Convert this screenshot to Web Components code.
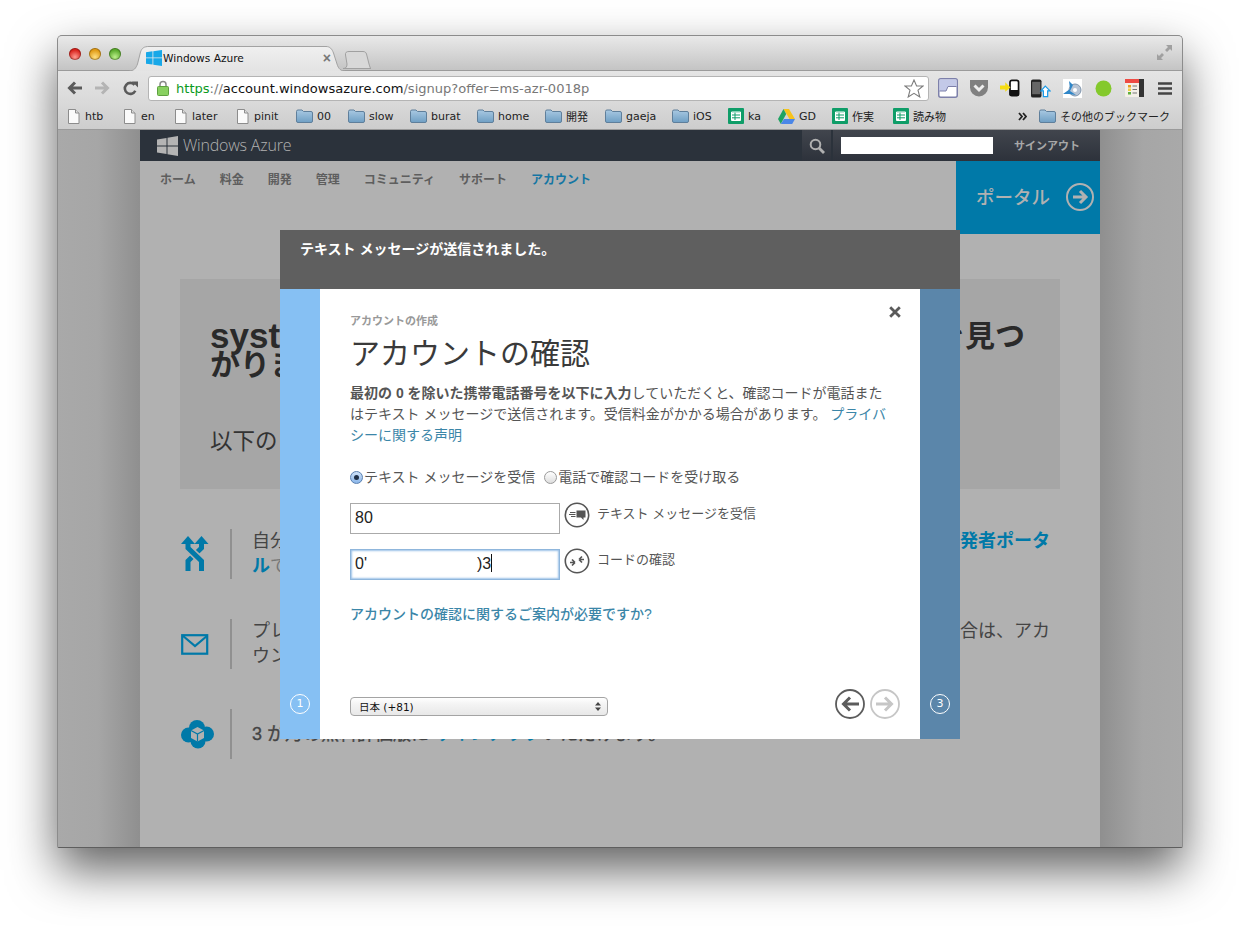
<!DOCTYPE html>
<html lang="ja"><head><meta charset="utf-8"><title>Windows Azure</title>
<style>
html,body{margin:0;padding:0;background:#fff;width:1239px;height:926px;overflow:hidden}
body{font-family:"Liberation Sans","Noto Sans CJK JP",sans-serif;--cjk:"Liberation Sans","Noto Sans CJK JP",sans-serif;--ui:"DejaVu Sans","Noto Sans CJK JP",sans-serif}
</style></head><body>
<x-window>
  <x-tabstrip></x-tabstrip>
  <x-toolbar url-a="https" url-b="://" url-c="account.windowsazure.com" url-d="/signup?offer=ms-azr-0018p"></x-toolbar>
  <x-bookmarks>
    <x-bm w="56" ico="doc">htb</x-bm><x-bm w="51" ico="doc">en</x-bm><x-bm w="62" ico="doc">later</x-bm><x-bm w="60" ico="doc">pinit</x-bm>
    <x-bm w="52" ico="folder">00</x-bm><x-bm w="62" ico="folder">slow</x-bm><x-bm w="67" ico="folder">burat</x-bm><x-bm w="68" ico="folder">home</x-bm>
    <x-bm w="60" ico="folder">開発</x-bm><x-bm w="67" ico="folder">gaeja</x-bm><x-bm w="56" ico="folder">iOS</x-bm><x-bm w="50" ico="sheet">ka</x-bm>
    <x-bm w="54" ico="drive">GD</x-bm><x-bm w="61" ico="sheet">作実</x-bm><x-bm w="125" ico="sheet">読み物</x-bm>
    <x-bm w="21" ico="chev"></x-bm><x-bm w="134" ico="folder">その他のブックマーク</x-bm>
  </x-bookmarks>
  <x-azure-page>
    <x-azure-header></x-azure-header>
    <x-azure-nav active="アカウント"></x-azure-nav>
    <x-hero></x-hero>
    <x-features>
      <x-feature ico="shuffle"><span>自分</span><span class="r link">発者ポータ</span><br><span class="link">ル</span><span class="dim">で</span></x-feature>
      <x-feature ico="mail"><span>プレ</span><span class="r">合は、アカ</span><br><span>ウン</span></x-feature>
      <x-feature ico="cloud" three><span>3 か月の無料評価版に <span class="blue">サインアップ</span>いただけます。</span></x-feature>
    </x-features>
    <x-modal slot="modal"></x-modal>
  </x-azure-page>
</x-window>
<script>
const ICONS={
doc:`<svg width="13" height="15" viewBox="0 0 13 15"><path d="M1.5.5H8.5L12 4V14.5H1.5Z" fill="#fafafa" stroke="#8c8c8c"/><path d="M8.5.5V4H12" fill="#ddd" stroke="#8c8c8c"/></svg>`,
folder:`<svg width="17" height="14" viewBox="0 0 17 14"><defs><linearGradient id="f" x1="0" y1="0" x2="0" y2="1"><stop offset="0" stop-color="#a9c9e2"/><stop offset="1" stop-color="#6f9fc4"/></linearGradient></defs><path d="M.5 2.5Q.5 1 2 1H6L7.5 2.5H15Q16.5 2.500 16.500 4V12Q16.500 13.500 15 13.500H2Q.5 13.500 .5 12Z" fill="url(#f)" stroke="#5f7f9b"/></svg>`,
sheet:`<svg width="16" height="16" viewBox="0 0 16 16"><rect width="16" height="16" rx="1" fill="#0f9d68"/><path d="M3.500 4H12.500V12.500H3.500ZM3.500 7H12.500M3.500 9.800H12.500M7 4V12.500" fill="#fff" stroke="#0f9d68" stroke-width="1"/><path d="M3.500 4H12.500V12.500H3.500Z" fill="none" stroke="#fff"/></svg>`,
drive:`<svg width="17" height="15" viewBox="0 0 17 15"><path d="M5.500 0H11L17 10H11.500Z" fill="#f7c31a"/><path d="M5.500 0L0 10L2.800 15L8.200 5Z" fill="#1ea362"/><path d="M6 10H17L14.200 15H2.800Z" fill="#4a86e8"/></svg>`,
chev:`<svg width="9" height="9" viewBox="0 0 9 9"><path d="M1 1L4 4.500L1 8M5 1L8 4.500L5 8" fill="none" stroke="#222" stroke-width="1.800"/></svg>`,
back:`<svg width="16" height="14" viewBox="0 0 16 14"><path d="M15 7H3M8 1.500L2.500 7L8 12.500" fill="none" stroke="#5a5a5a" stroke-width="3"/></svg>`,
fwd:`<svg width="16" height="14" viewBox="0 0 16 14"><path d="M1 7H13M8 1.500L13.500 7L8 12.500" fill="none" stroke="#b4b4b4" stroke-width="3"/></svg>`,
reload:`<svg width="15" height="15" viewBox="0 0 15 15"><path d="M12.300 9.800A5.500 5.500 0 1 1 11.500 3.800" fill="none" stroke="#5a5a5a" stroke-width="2.600"/><path d="M9 .5H15V6.500Z" fill="#5a5a5a"/></svg>`,
lock:`<svg width="12" height="16" viewBox="0 0 12 16"><path d="M3 7V4.500A3 3 0 0 1 9 4.500V7" fill="none" stroke="#8a8a8a" stroke-width="1.500"/><rect x=".5" y="6.500" width="11" height="9" rx="1" fill="#88d060" stroke="#5ea040"/></svg>`,
star:`<svg width="20" height="19" viewBox="0 0 20 19"><path d="M10 1L12.600 7H19L14 11.200L15.800 18L10 14.300L4.200 18L6 11.200L1 7H7.400Z" fill="#fff" stroke="#7d7d7d" stroke-width="1.100"/></svg>`,
e1:`<svg width="20" height="20" viewBox="0 0 20 20"><rect x=".75" y=".75" width="18.500" height="18.500" rx="2" fill="#fff" stroke="#7d80aa" stroke-width="1.500"/><path d="M1.500 1.500H18.500V8.500H10L8 13H1.500Z" fill="#c3c9e8"/><path d="M1.500 13H8L10 8.500H18.500" fill="none" stroke="#7d80aa"/></svg>`,
e2:`<svg width="20" height="18" viewBox="0 0 20 18"><path d="M1 1H19V8.500A9 9 0 0 1 1 8.500Z" fill="#808080"/><path d="M5.500 6.500L10 11L14.500 6.500" fill="none" stroke="#eee" stroke-width="3"/></svg>`,
e3:`<svg width="21" height="18" viewBox="0 0 21 18"><rect x="10.500" y="1" width="9" height="16" rx="2" fill="#fff" stroke="#111" stroke-width="1.800"/><rect x="10" y="11" width="10" height="6" rx="1" fill="#111"/><path d="M0 6.500H5.500V3L11 8.500L5.500 13V10.500H0Z" fill="#f5dc14"/></svg>`,
e4:`<svg width="21" height="19" viewBox="0 0 21 19"><rect x="0" y="0" width="11" height="19" rx="2" fill="#222"/><rect x="1.200" y="2.500" width="8.600" height="13" fill="#666"/><path d="M15 7L20 12H17.500V18H13V12H10.500Z" fill="#fff" stroke="#1a9be8" stroke-width="1.300"/></svg>`,
e5:`<svg width="19" height="19" viewBox="0 0 19 19"><rect width="19" height="19" fill="#fff"/><circle cx="12" cy="11" r="6" fill="#b8c4d4" stroke="#7f94ac"/><circle cx="12" cy="11" r="2" fill="#fff"/><path d="M0 15L7 10L6 2L10 6L7 12L13 16L6 15Z" fill="#2f86c8"/></svg>`,
e6:`<svg width="17" height="17" viewBox="0 0 17 17"><circle cx="8.500" cy="8.500" r="8" fill="#84c92c"/></svg>`,
e7:`<svg width="19" height="18" viewBox="0 0 19 18"><rect width="19" height="18" rx="1" fill="#f4f0e8"/><rect width="14" height="4" fill="#ee4b44"/><rect x="14" width="5" height="18" fill="#333"/><rect x="3" y="6" width="3" height="2.500" fill="#e6a020"/><rect x="3" y="9.500" width="3" height="2.500" fill="#f0d040"/><rect x="3" y="13" width="3" height="2.500" fill="#60b040"/><path d="M7.500 7H12M7.500 10.500H12M7.500 14H12" stroke="#777"/></svg>`,
menu:`<svg width="14" height="13" viewBox="0 0 14 13"><path d="M.5 1.500H13.500M.5 6.500H13.500M.5 11.500H13.500" stroke="#444" stroke-width="2.600" stroke-linecap="round"/></svg>`,
expand:`<svg width="15" height="15" viewBox="0 0 15 15"><path d="M9 0H15V6L13 4L10 7L8 5L11 2ZM0 15V9L2 11L5 8L7 10L4 13L6 15Z" fill="#a0a0a0"/></svg>`,
flag:`<svg width="16" height="16" viewBox="0 0 16 16"><path d="M0 2.300L6.500 1.300V7.500H0ZM7.300 1.200L16 0V7.500H7.300ZM0 8.300H6.500V14.600L0 13.700ZM7.300 8.300H16V16L7.300 14.800Z" fill="#18a8e8"/></svg>`,
logo:`<svg width="21" height="20" viewBox="0 0 21 20"><path d="M0 3.500L9.500 2V9.500H0ZM10.500 1.800L21 0V9.500H10.500ZM0 10.500H9.500V18L0 16.500ZM10.500 10.500H21V20L10.500 18.200Z" fill="#b4b4b4"/></svg>`,
search:`<svg width="16" height="16" viewBox="0 0 16 16"><circle cx="6.500" cy="6.500" r="4.800" fill="none" stroke="#b0b0b0" stroke-width="2"/><path d="M10 10L15 15" stroke="#b0b0b0" stroke-width="2.800"/></svg>`,
portal:`<svg width="28" height="28" viewBox="0 0 28 28"><circle cx="14" cy="14" r="13" fill="none" stroke="#b1b1b1" stroke-width="2"/><path d="M7 14H19M14 8L20 14L14 20" fill="none" stroke="#b1b1b1" stroke-width="3"/></svg>`,
shuffle:`<svg width="28" height="36" viewBox="0 0 28 36"><g fill="none" stroke-width="5"><path d="M20.500 8V12L7 25V35" stroke="#0079a8"/><path d="M7 8V12L20.500 25V35" stroke="#b1b1b1" stroke-width="8"/><path d="M7 8V12L20.500 25V35" stroke="#0079a8"/></g><path d="M7 0L14 8H0ZM20.500 0L27.500 8H13.500Z" fill="#0079a8"/></svg>`,
mail:`<svg width="28" height="21" viewBox="0 0 28 21"><rect x="1.200" y="1.200" width="25" height="18.500" fill="none" stroke="#0079a8" stroke-width="2.200"/><path d="M1.500 1.500L14 12L26.500 1.500" fill="none" stroke="#0079a8" stroke-width="2.200"/></svg>`,
cloud:`<svg width="33" height="29" viewBox="0 0 33 29"><g fill="#0079a8"><circle cx="7.500" cy="15" r="7.500"/><circle cx="16" cy="8" r="8"/><circle cx="25.500" cy="14" r="7.500"/><circle cx="17" cy="21" r="7.500"/></g><path d="M16.500 7L23 10.500V18L16.500 21.500L10 18V10.500Z" fill="#b1b1b1"/><path d="M10 10.500L16.500 14L23 10.500M16.500 14V21.500" fill="none" stroke="#0079a8" stroke-width="1.200"/></svg>`,
sms:`<svg width="26" height="26" viewBox="0 0 26 26"><circle cx="13" cy="13" r="11.700" fill="#fff" stroke="#555" stroke-width="1.600"/><path d="M6 10.500H11.500M5 12.500H11.500M7 14.500H11.500" stroke="#555"/><path d="M12.500 8.500H21.500V15.500H19.500V18L17 15.500H12.500Z" fill="#555"/></svg>`,
code:`<svg width="26" height="26" viewBox="0 0 26 26"><circle cx="13" cy="13" r="11.700" fill="#fff" stroke="#555" stroke-width="1.600"/><path d="M6 14.500H11M11 14.500L8 11.500M11 14.500L8 17.500M20 11.500H15M15 11.500L18 8.500M15 11.500L18 14.500" fill="none" stroke="#555" stroke-width="1.700"/></svg>`,
prev:`<svg width="30" height="30" viewBox="0 0 30 30"><circle cx="15" cy="15" r="14" fill="#fff" stroke="#5c5c5c" stroke-width="1.800"/><path d="M24 15H9M15 8.500L8.500 15L15 21.500" fill="none" stroke="#5c5c5c" stroke-width="3"/></svg>`,
next:`<svg width="30" height="30" viewBox="0 0 30 30"><circle cx="15" cy="15" r="14" fill="#fff" stroke="#c6c6c6" stroke-width="1.800"/><path d="M6 15H21M15 8.500L21.500 15L15 21.500" fill="none" stroke="#c6c6c6" stroke-width="3"/></svg>`,
close:`<svg width="12" height="12" viewBox="0 0 12 12"><path d="M1.200 1.200L10.800 10.800M10.800 1.200L1.200 10.800" stroke="#5a5a5a" stroke-width="2.800"/></svg>`,
updown:`<svg width="6" height="9" viewBox="0 0 6 9"><path d="M3 0L6 3.500H0ZM3 9L0 5.500H6Z" fill="#444"/></svg>`
};
class Base extends HTMLElement{
  constructor(){super();this.attachShadow({mode:'open'});}
  connectedCallback(){if(!this.done){this.done=1;this.shadowRoot.innerHTML='<style>'+this.css()+'</style>'+this.html();}}
  css(){return ':host{display:block}'} html(){return '<slot></slot>'}
}
const ic=n=>ICONS[n];
customElements.define('x-window',class extends Base{
  css(){return `:host{display:flex;flex-direction:column;box-sizing:border-box;width:1126px;height:813px;margin:35px 0 0 57px;border:1px solid #8c8c8c;border-bottom-color:#5e5e5e;border-radius:5px 5px 2px 2px;box-shadow:0 22px 48px rgba(0,0,0,.62);overflow:hidden;background:#a8a8a8}`}
});
customElements.define('x-tabstrip',class extends Base{
  css(){return `:host{display:flex;align-items:flex-end;height:34px;border-bottom:1px solid #9b9b9b;background:linear-gradient(#e9e9e9,#c4c4c4);font:10.600px var(--ui);color:#111;position:relative}
  .lights{display:flex;gap:8px;align-self:flex-start;margin:12px 0 0 11px}
  .l{width:12px;height:12px;border-radius:50%;box-shadow:inset 0 0 0 1px rgba(0,0,0,.28)}
  .r{background:radial-gradient(circle at 50% 75%,#ff9a90,#d8221c 65%)}.y{background:radial-gradient(circle at 50% 75%,#ffdf80,#e09a14 65%)}.g{background:radial-gradient(circle at 50% 75%,#bdf08c,#5aaa2c 65%)}
  .tab{position:relative;width:216px;height:25px;margin:0 0 -1px 8px;display:flex;align-items:center;padding:0 14px 2px 17px;box-sizing:border-box;gap:1px}
  .tab>svg.shape{position:absolute;left:0;top:0}
  .tab span{position:relative;flex:1;line-height:16px}
  .tab .fl,.tab .x{position:relative;display:flex}
  .x{color:#777;font-size:14px;line-height:14px;font-family:"Liberation Sans",sans-serif;font-weight:bold}
  .nt{margin:0 0 1px -2px;display:flex}
  .exp{margin:0 10px 0 auto;align-self:flex-start;padding-top:9px;display:flex}`}
  html(){return `<div class="lights"><div class="l r"></div><div class="l y"></div><div class="l g"></div></div>
  <div class="tab"><svg class="shape" width="216" height="25" viewBox="0 0 216 25"><defs><linearGradient id="t" x1="0" y1="0" x2="0" y2="1"><stop offset="0" stop-color="#f0f0f0"/><stop offset="1" stop-color="#e3e3e3"/></linearGradient></defs><path d="M0 25C5 25 7 22 8.500 18L11.500 6C13 2 15 .5 20 .5H197C201 .5 203 3 204.500 7L208 18C209.500 23 212 25 216 25" fill="url(#t)" stroke="#a2a2a2"/></svg><div class="fl">${ic('flag')}</div><span>Windows Azure</span><div class="x">×</div></div>
  <div class="nt"><svg width="28" height="18" viewBox="0 0 28 18"><path d="M0 17.500C3 17.500 4 16 4 13L2.500 4C2 1.500 3.500.5 6 .5H20C22 .5 23 1.500 23.500 3L26 13C27 16 27 17 28 17.500Z" fill="#d8d8d8" stroke="#a0a0a0"/></svg></div>
  <div class="exp">${ic('expand')}</div>`}
});
customElements.define('x-toolbar',class extends Base{
  css(){return `:host{display:flex;align-items:center;box-sizing:border-box;height:32px;background:linear-gradient(#e5e5e5,#d9d9d9);padding:2px 0 0 9px}
  .b{display:flex;align-items:center}
  .omni{box-sizing:border-box;width:781px;height:25px;margin:0 9px 0 10px;background:#fff;border:1px solid #b4b4b4;border-radius:3px;display:flex;align-items:center;padding:0 4px 0 8px;font:13.060px var(--ui);white-space:nowrap;color:#777}
  .omni .u{flex:1;margin-left:7px}.omni i{font-style:normal}.g{color:#0a9a1e}.d{color:#111}
  .ex{display:flex;align-items:center;gap:11px}.ex div{width:20px;display:flex;justify-content:center}`}
  html(){const a=n=>this.getAttribute('url-'+n);return `<div class="b">${ic('back')}</div><div class="b" style="margin-left:11px">${ic('fwd')}</div><div class="b" style="margin-left:13px">${ic('reload')}</div>
  <div class="omni">${ic('lock')}<span class="u"><i class="g">${a('a')}</i>${a('b')}<i class="d">${a('c')}</i>${a('d')}</span>${ic('star')}</div>
  <div class="ex"><div>${ic('e1')}</div><div>${ic('e2')}</div><div>${ic('e3')}</div><div>${ic('e4')}</div><div>${ic('e5')}</div><div>${ic('e6')}</div><div>${ic('e7')}</div><div>${ic('menu')}</div></div>`}
});
customElements.define('x-bookmarks',class extends Base{
  css(){return `:host{display:flex;align-items:center;height:26px;padding-left:9px;background:linear-gradient(#d9d9d9,#cdcdcd);border-bottom:1px solid #9a9a9a;font:11px var(--ui);color:#222}`}
});
customElements.define('x-bm',class extends Base{
  css(){return `:host{display:flex;align-items:center;flex:none;width:${this.getAttribute('w')}px;gap:${this.getAttribute('ico')=='doc'?5:4}px;white-space:nowrap}.i{display:flex}`}
  html(){return `<div class="i">${ic(this.getAttribute('ico'))}</div><slot></slot>`}
});
customElements.define('x-azure-page',class extends Base{
  css(){return `:host{display:block;position:relative;flex:1;background:linear-gradient(90deg,#a9a9a9 0,#a6a6a6 40px,#8f8f8f 82px,#8f8f8f 1042px,#a6a6a6 1085px,#a9a9a9 100%)}
  .col{width:960px;height:717px;margin-left:82px;background:#b1b1b1;overflow:hidden}
  ::slotted(x-modal){position:absolute;left:222px;top:100px}`}
  html(){return `<div class="col"><slot></slot></div><slot name="modal"></slot>`}
});
customElements.define('x-azure-header',class extends Base{
  css(){return `:host{display:flex;align-items:center;height:31px;background:#2b323b;color:#b1b1b1}
  .logo{display:flex;align-items:center;padding-left:17px;gap:5px;flex:1;font:300 16px/30px "Open Sans",sans-serif;letter-spacing:-.2px}
  .logo span{margin-top:-1px}
  .logo svg{display:block}
  .right{display:flex;align-items:center;height:31px;width:298px;background:linear-gradient(#41454d,#2d323b)}
  .s{width:29px;height:31px;display:flex;align-items:center;justify-content:center;border-right:2px solid #2b323b}
  .box{width:152px;height:17px;background:#fff;margin-left:8px}
  .o{font:bold 11px var(--cjk);margin:-2px 0 0 21px;color:#a8a8a8}`}
  html(){return `<div class="logo">${ic('logo')}<span>Windows Azure</span></div><div class="right"><div class="s">${ic('search')}</div><div class="box"></div><div class="o">サインアウト</div></div>`}
});
customElements.define('x-azure-nav',class extends Base{
  css(){return `:host{display:flex;justify-content:space-between;height:73px;font:bold 12px var(--cjk);color:#5e5e5e}
  nav{display:flex;gap:24px;padding:10px 0 0 20px;height:18px;line-height:18px}
  .a{color:#1576a3}
  .p{width:144px;background:#0079a8;color:#b1b1b1;display:flex;align-items:center;gap:16px;padding-left:20px;box-sizing:border-box;font:500 18.500px var(--cjk);padding-bottom:3px}
  .p svg{display:block;margin-top:2px}`}
  html(){return `<nav><span>ホーム</span><span>料金</span><span>開発</span><span>管理</span><span>コミュニティ</span><span>サポート</span><span class="a">アカウント</span></nav><div class="p"><span>ポータル</span>${ic('portal')}</div>`}
});
customElements.define('x-hero',class extends Base{
  css(){return `:host{display:block;box-sizing:border-box;margin:45px 40px 0;height:210px;background:#a6a6a6;padding:42px 35px 0 30px;color:#2a2a2a}
  .h{font:bold 30px/29px var(--cjk)}
  .l{display:flex;justify-content:space-between}
  .sy{font-size:35px}
  .p{font:22.500px/30px var(--cjk);margin-top:48px;color:#333}`}
  html(){return `<div class="h"><div class="l"><span class="sy">syst</span><span>を見つ</span></div><div>かりま</div></div><div class="p">以下の</div>`}
});
customElements.define('x-features',class extends Base{
  css(){return `:host{display:flex;flex-direction:column;gap:40px;margin:40px 40px 0}`}
});
customElements.define('x-feature',class extends Base{
  css(){return `:host{display:flex;height:50px;font:18px/25px var(--cjk);color:#444}
  .i{width:50px;display:flex;align-items:center;flex:none;padding-left:1px;box-sizing:border-box}
  .i svg{display:block}
  .sep{width:2px;background:#909090;flex:none}
  .t{width:800px;margin-left:20px;white-space:nowrap;position:relative;height:50px;${this.hasAttribute('three')?'-webkit-text-stroke:.35px currentColor;padding-top:13px;box-sizing:border-box':''}}
  ::slotted(.r){float:right;margin-right:2px}
  ::slotted(.link){color:#0079a8;font-weight:bold}
  ::slotted(.dim){color:#777}`}
  html(){return `<div class="i">${ic(this.getAttribute('ico'))}</div><div class="sep"></div><div class="t"><slot></slot></div>`}
});
document.querySelectorAll('x-feature .blue').forEach(e=>{e.style.color='#0079a8'});
customElements.define('x-step',class extends Base{
  css(){return `:host{display:flex;flex:none;width:40px;height:450px;box-sizing:border-box;align-items:flex-end;justify-content:center;padding-bottom:25px;background:${this.getAttribute('bg')}}
  .c{width:18px;height:18px;border:1.500px solid #fff;border-radius:50%;color:#fff;font:11px/18px "DejaVu Sans",sans-serif;text-align:center}`}
  html(){return `<div class="c"><slot></slot></div>`}
});
customElements.define('x-field',class extends Base{
  css(){return `:host{display:flex;align-items:flex-start;height:31px;font:13px/22px var(--cjk);color:#555}
  .f{box-sizing:border-box;width:210px;height:31px;background:#fff;border:1px solid #aaa;font:16px/28px "Liberation Sans",sans-serif;color:#222;padding:0 4px;display:flex;white-space:nowrap}
  :host([focus]) .f{border:1px solid #8fb6dc;box-shadow:0 0 2px 1px #9cc2e8 inset}
  .ic{display:flex;margin:-1px 7px 0 4px}
  .lab{line-height:22px}`}
  html(){return `<div class="f"><slot name="v"></slot></div><div class="ic">${ic(this.getAttribute('ico'))}</div><div class="lab"><slot></slot></div>`}
});
customElements.define('x-radio',class extends Base{
  css(){return `:host{display:inline-flex;align-items:center;font:14px/20px var(--cjk);color:#555}
  .o{box-sizing:border-box;width:13px;height:13px;border-radius:50%;border:1px solid #9a9a9a;background:linear-gradient(#fff,#ddd);margin-right:1px;display:flex;align-items:center;justify-content:center;flex:none}
  :host([on]) .o{border-color:#5a80b0;background:linear-gradient(#cfe2f8,#8ab6ea)}
  :host([on]) .o::after{content:"";width:5px;height:5px;border-radius:50%;background:#1f2f45}`}
  html(){return `<div class="o"></div><slot></slot>`}
});
customElements.define('x-select',class extends Base{
  css(){return `:host{display:flex;align-items:center;justify-content:space-between;box-sizing:border-box;width:258px;height:19px;margin-top:5px;border:1px solid #a4a4a4;border-radius:4px;background:linear-gradient(#fff,#f4f4f4 35%,#e8e8e8);padding:0 6px 0 8px;font:10.500px var(--ui);color:#111}`}
  html(){return `<span><slot></slot></span>${ic('updown')}`}
});
customElements.define('x-modal',class extends Base{
  css(){return `:host{display:block;width:680px;height:509px;font-family:var(--cjk)}
  .top{height:59px;box-sizing:border-box;background:#5f5f5f;color:#fff;font:bold 14px/20px var(--cjk);padding:9px 20px}
  .body{display:flex;height:450px}
  .main{flex:1;background:#fff;padding:22px 30px 0;box-sizing:border-box;position:relative;display:flex;flex-direction:column}
  .close{position:absolute;right:19px;top:17px;display:flex}
  .sup{font:bold 11px/20px var(--cjk);color:#999}
  h1{margin:1px 0 0;font:400 30px/44px var(--cjk);color:#3a3a3a}
  p{margin:7px 0 0;font:14px/21px var(--cjk);color:#555;white-space:nowrap}
  p b{color:#555}
  a{color:#3b86a8}
  .radios{display:flex;gap:9px;margin-top:21px;height:20px}
  .fields{display:flex;flex-direction:column;gap:15px;margin-top:16px}
  .help{margin-top:24px;font:500 14px/20px var(--cjk)}
  .foot{margin-top:auto;display:flex;align-items:center;justify-content:space-between;margin-right:-10px;height:30px;margin-bottom:20px}
  .nav{display:flex;gap:5px}`}
  html(){return `<div class="top">テキスト メッセージが送信されました。</div><div class="body"><x-step bg="#86c0f3">1</x-step>
  <div class="main"><div class="close">${ic('close')}</div><div class="sup">アカウントの作成</div><h1>アカウントの確認</h1>
  <p><b>最初の 0 を除いた携帯電話番号を以下に入力</b>していただくと、確認コードが電話また<br>はテキスト メッセージで送信されます。受信料金がかかる場合があります。 <a>プライバ<br>シーに関する声明</a></p>
  <div class="radios"><x-radio on>テキスト メッセージを受信</x-radio><x-radio>電話で確認コードを受け取る</x-radio></div>
  <div class="fields"><x-field ico="sms"><span slot="v">80</span>テキスト メッセージを受信</x-field>
  <x-field ico="code" focus><span slot="v">0'<span style="display:inline-block;width:110px"></span>)3<span style="display:inline-block;width:1px;height:18px;background:#111;vertical-align:-3px"></span></span>コードの確認</x-field></div>
  <div class="help"><a>アカウントの確認に関するご案内が必要ですか?</a></div>
  <div class="foot"><x-select>日本 (+81)</x-select><div class="nav">${ic('prev')}${ic('next')}</div></div></div>
  <x-step bg="#5b86aa">3</x-step></div>`}
});
</script>
</body></html>
